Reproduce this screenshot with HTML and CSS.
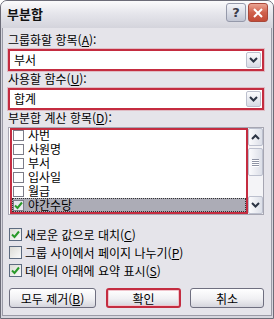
FILE: index.html
```html
<!DOCTYPE html>
<html lang="ko">
<head>
    <meta charset="UTF-8">
    <meta name="viewport" content="width=device-width, initial-scale=1.0">
    <title>부분합</title>
    <link rel="stylesheet" href="styles.css">
</head>
<body>
    <div class="window">
        <div class="titlebar">
            <span class="title">부분합</span>
            <div class="title-buttons">
                <span class="tb-btn help">?</span>
                <span class="tb-btn close">
                    <svg width="10" height="10" viewBox="0 0 10 10"><path d="M1 1L9 9M9 1L1 9" stroke="#fff" stroke-width="2" fill="none"/></svg>
                </span>
            </div>
        </div>

        <div class="frame">
            <div class="content">
                <!-- Group by -->
                <div class="field-label">그룹화할 항목(<u>A</u>):</div>
                <div class="combo marked">
                    <span class="combo-value">부서</span>
                    <span class="combo-arrow">
                        <svg width="9" height="6" viewBox="0 0 9 6"><path d="M1 1L4.5 4.5L8 1" stroke="#2c3444" stroke-width="2" fill="none"/></svg>
                    </span>
                </div>

                <!-- Function -->
                <div class="field-label">사용할 함수(<u>U</u>):</div>
                <div class="combo marked">
                    <span class="combo-value">합계</span>
                    <span class="combo-arrow">
                        <svg width="9" height="6" viewBox="0 0 9 6"><path d="M1 1L4.5 4.5L8 1" stroke="#2c3444" stroke-width="2" fill="none"/></svg>
                    </span>
                </div>

                <!-- Subtotal columns -->
                <div class="field-label">부분합 계산 항목(<u>D</u>):</div>
                <div class="listbox">
                    <div class="list-items marked">
                        <div class="rows">
                            <div class="row"><span class="box"></span>사번</div>
                            <div class="row"><span class="box"></span>사원명</div>
                            <div class="row"><span class="box"></span>부서</div>
                            <div class="row"><span class="box"></span>입사일</div>
                            <div class="row"><span class="box"></span>월급</div>
                            <div class="row selected">
                                <span class="box">
                                    <svg width="9" height="9" viewBox="0 0 9 9"><path d="M1 4.5L3.5 7L8 1.5" stroke="#2a9a2a" stroke-width="2" fill="none"/></svg>
                                </span>야간수당
                            </div>
                        </div>
                    </div>
                    <div class="scrollbar">
                        <span class="sb-btn">
                            <svg width="9" height="6" viewBox="0 0 9 6"><path d="M1 5L4.5 1.5L8 5" stroke="#2c3444" stroke-width="2" fill="none"/></svg>
                        </span>
                        <div class="sb-track">
                            <div class="sb-thumb">
                                <span class="grip"></span>
                                <span class="grip"></span>
                                <span class="grip"></span>
                                <span class="grip"></span>
                            </div>
                        </div>
                        <span class="sb-btn">
                            <svg width="9" height="6" viewBox="0 0 9 6"><path d="M1 1L4.5 4.5L8 1" stroke="#2c3444" stroke-width="2" fill="none"/></svg>
                        </span>
                    </div>
                </div>

                <!-- Options -->
                <div class="options">
                    <div class="option">
                        <span class="check">
                            <svg width="9" height="9" viewBox="0 0 9 9"><path d="M1 4.5L3.5 7L8 1.5" stroke="#2a9a2a" stroke-width="2" fill="none"/></svg>
                        </span>새로운 값으로 대치(<u>C</u>)
                    </div>
                    <div class="option">
                        <span class="check"></span>그룹 사이에서 페이지 나누기(<u>P</u>)
                    </div>
                    <div class="option">
                        <span class="check">
                            <svg width="9" height="9" viewBox="0 0 9 9"><path d="M1 4.5L3.5 7L8 1.5" stroke="#2a9a2a" stroke-width="2" fill="none"/></svg>
                        </span>데이터 아래에 요약 표시(<u>S</u>)
                    </div>
                </div>

                <div class="buttons">
                    <button class="btn btn-remove">모두 제거(<u>B</u>)</button>
                    <button class="btn btn-ok">확인</button>
                    <button class="btn btn-cancel">취소</button>
                </div>
            </div>
        </div>
    </div>
</body>
</html>
```

FILE: styles.css
```css
* {
    margin: 0;
    padding: 0;
    box-sizing: border-box;
}

body {
    width: 274px;
    height: 319px;
    overflow: hidden;
    background: #fff;
    font-family: "Noto Sans CJK KR", "Noto Sans", sans-serif;
    font-size: 12px;
    color: #000;
}

u {
    text-decoration: underline;
    text-underline-offset: 1px;
}

.window {
    height: 319px;
    display: flex;
    flex-direction: column;
    border: 1px solid #6c6c78;
    border-radius: 7px 7px 0 0;
    background: #d6d6de;
    overflow: hidden;
}

/* Title bar */
.titlebar {
    height: 27px;
    flex: none;
    display: flex;
    justify-content: space-between;
    align-items: flex-start;
    padding: 2px 5px 0 6px;
    background: linear-gradient(#fbfbfc, #e6e6ec 45%, #d4d4dc);
}

.title {
    font-size: 13px;
    font-weight: 700;
    line-height: 22px;
    color: #111;
}

.title-buttons {
    display: flex;
    gap: 2px;
}

.tb-btn {
    width: 20px;
    height: 19px;
    border-radius: 3px;
    display: flex;
    align-items: center;
    justify-content: center;
}

.help {
    border: 1px solid #9599aa;
    background: linear-gradient(#f4f5fa, #c2c6d4);
    color: #3c3c4a;
    font-family: "DejaVu Sans", sans-serif;
    font-size: 13px;
    font-weight: 700;
}

.close {
    border: 1px solid #a8483a;
    background: linear-gradient(#eba493, #d0614c 50%, #c24a36);
}

/* Dialog body */
.frame {
    flex: 1;
    display: flex;
    padding: 0 1px 2px;
}

.content {
    flex: 1;
    display: flex;
    flex-direction: column;
    border: 1px solid #9a9aa6;
    border-top: none;
    background: #e5e4ea;
    padding: 5px 7px 0 5px;
}

.field-label {
    height: 14px;
    line-height: 14px;
    margin-bottom: 2px;
}

.marked {
    border: 2px solid #c42c40 !important;
    box-shadow: 0 0 0 1px rgba(214, 110, 124, 0.35);
}

.combo {
    height: 22px;
    margin-bottom: 1px;
    display: flex;
    align-items: center;
    background: #fff;
}

.combo-value {
    flex: 1;
    padding-left: 4px;
    line-height: 16px;
}

.combo-arrow {
    width: 15px;
    height: 16px;
    margin-right: 1px;
    border: 1px solid #bcc0ce;
    border-radius: 2px;
    background: linear-gradient(#fbfbfd, #d8dbe5);
    display: flex;
    align-items: center;
    justify-content: center;
}

/* List box */
.listbox {
    height: 88px;
    margin-bottom: 10px;
    display: flex;
    border: 1px solid #a6a6b2;
    background: #fff;
}

.list-items {
    flex: 1;
    margin-left: 1px;
    overflow: hidden;
    box-shadow: none;
}

.rows {
    margin-top: -2px;
}

.row {
    height: 14px;
    display: flex;
    align-items: center;
    padding-left: 1px;
    line-height: 14px;
}

.row .box {
    width: 11px;
    height: 11px;
    margin-right: 4px;
    border: 1px solid #7c7c88;
    background: #fff;
    display: flex;
    align-items: center;
    justify-content: center;
}

.row.selected {
    background: #acacb6;
    outline: 1px dotted #333;
    outline-offset: -1px;
}

.row.selected .box {
    background: #e8e8ee;
}

.scrollbar {
    width: 15px;
    display: flex;
    flex-direction: column;
    background: #f4f4f7;
}

.sb-btn,
.sb-thumb {
    border: 1px solid #bcc0ce;
    border-radius: 2px;
    background: linear-gradient(90deg, #fbfbfd, #dcdfe8);
}

.sb-btn {
    height: 18px;
    display: flex;
    align-items: center;
    justify-content: center;
}

.sb-track {
    flex: 1;
    padding-top: 2px;
}

.sb-thumb {
    height: 28px;
    display: flex;
    flex-direction: column;
    align-items: center;
    justify-content: center;
    gap: 1px;
}

.grip {
    width: 7px;
    height: 1px;
    background: #8e93a4;
    box-shadow: 0 1px 0 #fff;
}

/* Options */
.options {
    display: flex;
    flex-direction: column;
    margin-bottom: 9px;
}

.option {
    height: 18px;
    display: flex;
    align-items: center;
    padding-left: 1px;
}

.check {
    width: 13px;
    height: 13px;
    margin-right: 3px;
    border: 1px solid #5d6b80;
    background: linear-gradient(135deg, #dcdcd6, #fafafa);
    display: flex;
    align-items: center;
    justify-content: center;
}

/* Buttons */
.buttons {
    display: flex;
    padding-left: 1px;
}

.btn {
    height: 20px;
    font-family: inherit;
    font-size: 12px;
    color: #000;
    border: 1px solid #6f6f80;
    border-radius: 3px;
    background: linear-gradient(#ffffff, #f0f0f3 55%, #d5d5dd);
}

.btn-remove {
    width: 87px;
}

.btn-ok {
    width: 75px;
    margin-left: 10px;
    border: 2px solid #c42c40;
    box-shadow: inset 0 0 0 1px #f0c4cc;
}

.btn-cancel {
    width: 74px;
    margin-left: 9px;
}
```
